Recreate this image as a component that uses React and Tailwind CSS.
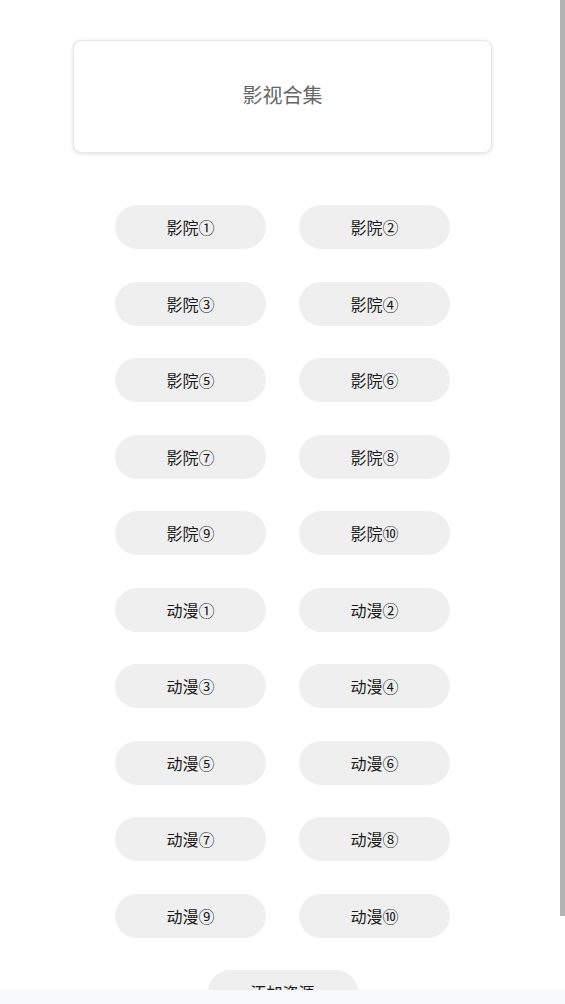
const cinemas = ['影院①', '影院②', '影院③', '影院④', '影院⑤', '影院⑥', '影院⑦', '影院⑧', '影院⑨', '影院⑩'];
const anime = ['动漫①', '动漫②', '动漫③', '动漫④', '动漫⑤', '动漫⑥', '动漫⑦', '动漫⑧', '动漫⑨', '动漫⑩'];

function Pill({ label }) {
  return (
    <button className="w-[151px] h-[44px] rounded-full bg-[#efefef] text-[16px] text-[#1a1a1a] flex items-center justify-center">
      {label}
    </button>
  );
}

export default function App() {
  return (
    <div className="relative min-h-screen bg-white" style={{ fontFamily: '"Noto Sans CJK SC", "Noto Sans", sans-serif' }}>
      <div className="pt-[40px] pb-[40px] flex flex-col items-center">
        <div className="w-[419px] h-[113px] rounded-lg border border-[#e6e6e6] bg-white shadow-[0_1px_4px_rgba(0,0,0,0.12)] flex items-center justify-center pb-[3px]">
          <span className="text-[20px] text-[#666]">影视合集</span>
        </div>

        <div className="mt-[52px] grid grid-cols-2 gap-x-[33px] gap-y-[32.5px]">
          {[...cinemas, ...anime].map((label) => (
            <Pill key={label} label={label} />
          ))}
        </div>

        <div className="mt-[32.5px]">
          <button className="w-[150px] h-[44px] rounded-full bg-[#efefef] text-[16px] text-[#1a1a1a] flex items-center justify-center">
            添加资源
          </button>
        </div>
      </div>

      {/* fixed bottom strip */}
      <div className="fixed bottom-0 left-0 right-0 h-[14px] bg-[#f8f9fb]" />
      {/* scroll thumb */}
      <div className="fixed top-0 right-0 w-[5px] h-[916px] bg-[#b3b3b3]" />
    </div>
  );
}
